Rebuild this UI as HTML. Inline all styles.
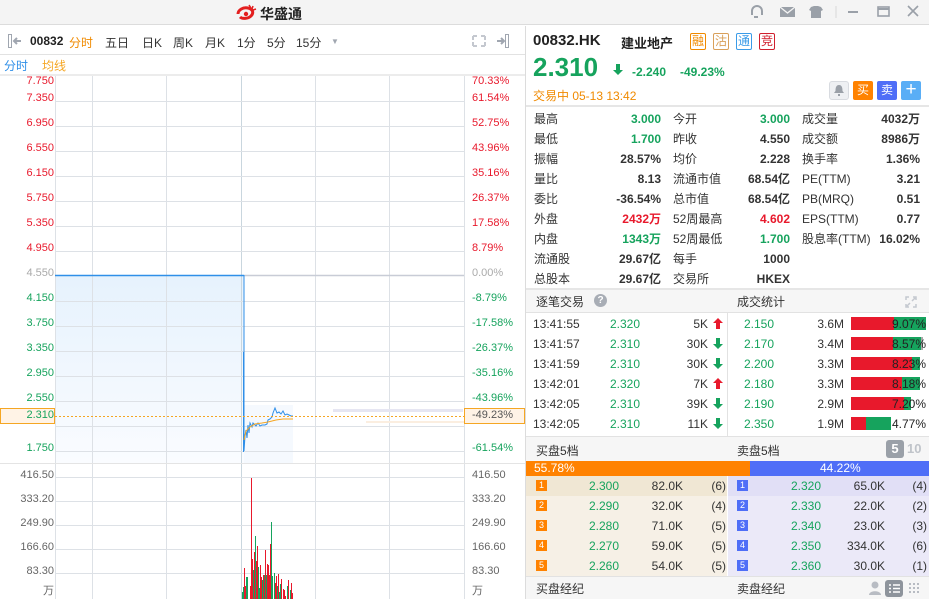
<!DOCTYPE html>
<html><head><meta charset="utf-8"><style>
*{margin:0;padding:0;box-sizing:border-box}
body{width:929px;height:599px;overflow:hidden;background:#fff;font-family:"Liberation Sans","Noto Sans CJK SC",sans-serif;font-size:12px;color:#333;position:relative}
.a{position:absolute;white-space:nowrap}
.g{color:#16a35d}.r{color:#e8192c}.o{color:#f08a00}
.b{font-weight:bold}
.rt{text-align:right}
.tag{position:absolute;top:33px;width:16px;height:17px;border:1px solid;border-radius:2px;font-size:12px;line-height:15px;text-align:center}
.bd{position:absolute;width:11px;height:11px;color:#fff;font-size:9px;line-height:11px;text-align:center}
.tb{position:absolute;top:34px;font-size:12px;white-space:nowrap}
</style></head><body>
<div class="a" style="left:0;top:0;width:929px;height:25px;background:#f4f4f4;border-bottom:1px solid #dcdcdc"></div>
<svg class="a" style="left:235px;top:4px" width="24" height="17" viewBox="0 0 24 17"><path d="M3 10c0-4 5-7 10-6 5 1 6 5 3 8-3 3-9 3-11 1" fill="none" stroke="#e31f1f" stroke-width="3"/><circle cx="11" cy="10" r="2.2" fill="#e31f1f"/><path d="M14 1l2 3M18 2l-1 3M21 5l-3 1" stroke="#e31f1f" stroke-width="1.5"/></svg>
<div class="a b" style="left:260px;top:4px;font-size:14px;color:#222">华盛通</div>
<svg class="a" style="left:748px;top:4px" width="180" height="16" viewBox="0 0 180 16"><g fill="none" stroke="#9aa0a8" stroke-width="2"><path d="M4 11V7a5 5 0 0 1 10 0v4"/><path d="M6 13h4"/></g><rect x="32" y="3" width="15" height="10" fill="#9aa0a8"/><path d="M32 3l7.5 6 7.5-6" stroke="#f4f4f4" stroke-width="1.3" fill="none"/><path d="M63 3l3-1h4l3 1 2 3-2 1v7h-10V7l-2-1z" fill="#9aa0a8"/><path d="M88 2v12" stroke="#d8d8d8"/><path d="M100 8h10" stroke="#9aa0a8" stroke-width="2"/><rect x="130" y="3" width="11" height="9" fill="none" stroke="#9aa0a8" stroke-width="1.6"/><path d="M130 5h11" stroke="#9aa0a8" stroke-width="2"/><path d="M160 2l10 10M170 2l-10 10" stroke="#9aa0a8" stroke-width="1.6"/></svg>

<div class="a" style="left:0;top:26px;width:525px;height:29px;border-bottom:1px solid #e2e2e2"></div>
<svg class="a" style="left:8px;top:34px" width="14" height="14"><rect x="0.5" y="0.5" width="3" height="13" fill="none" stroke="#a0a6b0"/><path d="M13 7H7M9 4L6 7l3 3" stroke="#a0a6b0" stroke-width="2" fill="none"/></svg>
<div class="tb b" style="left:30px;color:#222">00832</div>
<div class="tb" style="left:69px;color:#f08a00">分时</div>
<div class="tb" style="left:105px">五日</div>
<div class="tb" style="left:142px">日K</div>
<div class="tb" style="left:173px">周K</div>
<div class="tb" style="left:205px">月K</div>
<div class="tb" style="left:237px">1分</div>
<div class="tb" style="left:267px">5分</div>
<div class="tb" style="left:296px">15分</div>
<div class="a" style="left:331px;top:37px;font-size:8px;color:#a0a6b0">▼</div>
<svg class="a" style="left:472px;top:35px" width="14" height="12"><path d="M1 1h4M1 1v4M13 1h-4M13 1v4M1 11h4M1 11v-4M13 11h-4M13 11v-4" stroke="#c4c8cf" stroke-width="2"/></svg>
<svg class="a" style="left:496px;top:34px" width="14" height="14"><rect x="9.5" y="0.5" width="3" height="13" fill="none" stroke="#a0a6b0"/><path d="M1 7h6M5 4l3 3-3 3" stroke="#a0a6b0" stroke-width="2" fill="none"/></svg>
<div class="a" style="left:4px;top:57px;font-size:12px;color:#2f8fe8">分时</div>
<div class="a" style="left:42px;top:57px;font-size:12px;color:#f5a623">均线</div>
<div class="a" style="left:0;top:74px;width:525px;height:2px;background:#ececec"></div>
<div class="a" style="left:525px;top:26px;width:1px;height:573px;background:#dcdcdc"></div>

<svg class="a" style="left:0;top:0" width="525" height="599">
<defs><linearGradient id="fg" x1="0" y1="0" x2="0" y2="1"><stop offset="0" stop-color="#e6f2fd"/><stop offset="1" stop-color="#fafcff"/></linearGradient></defs>
<rect x="55" y="275" width="189" height="188" fill="url(#fg)"/>
<rect x="244" y="405" width="49" height="58" fill="#f5f9fe"/>
<g stroke="#dde1e6" stroke-width="1">
<path d="M55.5 76V599M92.5 76V599M166.5 76V599M315.5 76V599M389.5 76V599M464.5 76V599"/>
<path d="M241.5 76V599" stroke="#c9d6de"/>
<path d="M55 101.5H464M55 126.5H464M55 151.5H464M55 176.5H464M55 201.5H464M55 226.5H464M55 251.5H464M55 301.5H464M55 326.5H464M55 351.5H464M55 376.5H464M55 401.5H464M55 426.5H464M55 451.5H464"/>
<path d="M55 477.5H464M55 501.5H464M55 525.5H464M55 549.5H464M55 573.5H464"/>
<path d="M0 463.5H525" stroke="#e4e4e4"/>
</g>
<path d="M55 275.5H244" stroke="#2f8fe8" stroke-width="1.5"/>
<path d="M244 275.5H464" stroke="#c8ccd6" stroke-width="1.5"/>
<path d="M244 275V451" stroke="#2f8fe8" stroke-width="1"/>
<path d="M243.5 352V452" stroke="#2f8fe8" stroke-width="1"/>
<rect x="333" y="409" width="130" height="3" fill="#e6e6f2"/>
<rect x="366" y="421" width="98" height="2" fill="#fbeee0"/>
<polyline fill="none" stroke="#2f8fe8" stroke-width="1" points="244,451 245,436 246,430 247,438 248,425 249,433 250,423 252,427 253,423 255,425 256,426 258,423 260,426 262,425 265,425 267,424 268,420 270,419 272,417 273,413 275,408 277,413 279,412 281,414 283,411 285,415 287,414 289,415 291,416 293,416"/>
<polyline fill="none" stroke="#f5a623" stroke-width="1" points="244,440 246,431 250,427 255,424 262,423 268,422 272,421 276,420 283,419 293,419"/>
<path d="M55 416.5H464" stroke="#f5a623" stroke-dasharray="2,2"/>
<rect x="0.5" y="408.5" width="54" height="15" fill="#fff3e6" stroke="#f5a623"/>
<rect x="464.5" y="408.5" width="60" height="15" fill="#fff3e6" stroke="#f5a623"/>
<g stroke-width="1">
<path stroke="#16a35d" d="M242.5 599V592M243.5 599V587M246.5 599V577M247.5 599V577M253.5 599V570M255.5 599V536M258.5 599V567M259.5 599V588M262.5 599V580M264.5 599V575M266.5 599V575M271.5 599V522M272.5 599V576M274.5 599V573M277.5 599V586M279.5 599V592M280.5 599V584M287.5 599V586M290.5 599V590"/>
<path stroke="#e8192c" d="M244.5 599V568M245.5 599V586M250.5 599V586M251.5 599V478M252.5 599V559M254.5 599V552M256.5 599V561M257.5 599V546M260.5 599V565M261.5 599V577M263.5 599V575M265.5 599V550M267.5 599V564M268.5 599V565M269.5 599V575M270.5 599V544M275.5 599V583M276.5 599V576M278.5 599V574M281.5 599V579M283.5 599V589M284.5 599V590M285.5 599V596M288.5 599V580M291.5 599V583M292.5 599V593"/>
</g>
</svg>
<div style="font-size:11px">
<div class="a r rt" style="left:0;width:54px;top:75px">7.750</div>
<div class="a r rt" style="left:0;width:54px;top:92px">7.350</div>
<div class="a r rt" style="left:0;width:54px;top:117px">6.950</div>
<div class="a r rt" style="left:0;width:54px;top:142px">6.550</div>
<div class="a r rt" style="left:0;width:54px;top:167px">6.150</div>
<div class="a r rt" style="left:0;width:54px;top:192px">5.750</div>
<div class="a r rt" style="left:0;width:54px;top:217px">5.350</div>
<div class="a r rt" style="left:0;width:54px;top:242px">4.950</div>
<div class="a rt" style="left:0;width:54px;top:267px;color:#aaa">4.550</div>
<div class="a g rt" style="left:0;width:54px;top:292px">4.150</div>
<div class="a g rt" style="left:0;width:54px;top:317px">3.750</div>
<div class="a g rt" style="left:0;width:54px;top:342px">3.350</div>
<div class="a g rt" style="left:0;width:54px;top:367px">2.950</div>
<div class="a g rt" style="left:0;width:54px;top:392px">2.550</div>
<div class="a g rt" style="left:0;width:54px;top:409px">2.310</div>
<div class="a g rt" style="left:0;width:54px;top:442px">1.750</div>
<div class="a r" style="left:472px;top:75px">70.33%</div>
<div class="a r" style="left:472px;top:92px">61.54%</div>
<div class="a r" style="left:472px;top:117px">52.75%</div>
<div class="a r" style="left:472px;top:142px">43.96%</div>
<div class="a r" style="left:472px;top:167px">35.16%</div>
<div class="a r" style="left:472px;top:192px">26.37%</div>
<div class="a r" style="left:472px;top:217px">17.58%</div>
<div class="a r" style="left:472px;top:242px">8.79%</div>
<div class="a" style="left:472px;top:267px;color:#aaa">0.00%</div>
<div class="a g" style="left:472px;top:292px">-8.79%</div>
<div class="a g" style="left:472px;top:317px">-17.58%</div>
<div class="a g" style="left:472px;top:342px">-26.37%</div>
<div class="a g" style="left:472px;top:367px">-35.16%</div>
<div class="a g" style="left:472px;top:392px">-43.96%</div>
<div class="a" style="left:472px;top:409px;color:#555">-49.23%</div>
<div class="a g" style="left:472px;top:442px">-61.54%</div>
<div class="a rt" style="left:0;width:54px;top:469px;color:#666">416.50</div>
<div class="a rt" style="left:0;width:54px;top:493px;color:#666">333.20</div>
<div class="a rt" style="left:0;width:54px;top:517px;color:#666">249.90</div>
<div class="a rt" style="left:0;width:54px;top:541px;color:#666">166.60</div>
<div class="a rt" style="left:0;width:54px;top:565px;color:#666">83.30</div>
<div class="a rt" style="left:0;width:54px;top:582px;color:#666">万</div>
<div class="a" style="left:472px;top:469px;color:#666">416.50</div>
<div class="a" style="left:472px;top:493px;color:#666">333.20</div>
<div class="a" style="left:472px;top:517px;color:#666">249.90</div>
<div class="a" style="left:472px;top:541px;color:#666">166.60</div>
<div class="a" style="left:472px;top:565px;color:#666">83.30</div>
<div class="a" style="left:472px;top:582px;color:#666">万</div>
</div>

<div class="a b" style="left:533px;top:32px;font-size:15px;color:#222">00832.HK</div>
<div class="a b" style="left:621px;top:33px;font-size:13px;color:#222">建业地产</div>
<div class="tag" style="left:690px;color:#f08a00;border-color:#f08a00">融</div>
<div class="tag" style="left:713px;color:#d9a05a;border-color:#d9a05a">沽</div>
<div class="tag" style="left:736px;color:#3a9be8;border-color:#3a9be8">通</div>
<div class="tag" style="left:759px;color:#d0202e;border-color:#d0202e">竞</div>
<div class="a b g" style="left:533px;top:52px;font-size:26px">2.310</div>
<svg class="a" style="left:613px;top:64px" width="10" height="12"><path d="M3 0h4v6h3L5 11 0 6h3z" fill="#16a35d"/></svg>
<div class="a g b" style="left:632px;top:65px;font-size:12px">-2.240</div>
<div class="a g b" style="left:680px;top:65px;font-size:12px">-49.23%</div>
<div class="a o" style="left:533px;top:87px;font-size:12px">交易中 05-13 13:42</div>
<div class="a" style="left:829px;top:81px;width:20px;height:19px;background:#eef0f3;border:1px solid #d8dbe0;border-radius:3px"></div>
<svg class="a" style="left:834px;top:85px" width="10" height="11"><path d="M5 0C2 0 1.5 3 1.5 6L0 8h10L8.5 6C8.5 3 8 0 5 0zM4 9h2v2H4z" fill="#9aa0a8"/></svg>
<div class="a" style="left:853px;top:81px;width:20px;height:19px;background:#ff8200;color:#fff;text-align:center;line-height:19px;font-size:12px;border-radius:2px">买</div>
<div class="a" style="left:877px;top:81px;width:20px;height:19px;background:#4f6ef7;color:#fff;text-align:center;line-height:19px;font-size:12px;border-radius:2px">卖</div>
<div class="a" style="left:901px;top:81px;width:20px;height:19px;background:#5aaef6;color:#fff;text-align:center;line-height:18px;font-size:19px;border-radius:2px">+</div>
<div class="a" style="left:526px;top:105px;width:403px;height:2px;background:#e6e6e6"></div>

<div style="font-size:12px">
<div class="a" style="left:534px;top:109px;line-height:20px">最高<br>最低<br>振幅<br>量比<br>委比<br>外盘<br>内盘<br>流通股<br>总股本</div>
<div class="a b rt" style="left:600px;width:61px;top:109px;line-height:20px"><span class="g">3.000</span><br><span class="g">1.700</span><br>28.57%<br>8.13<br>-36.54%<br><span class="r">2432万</span><br><span class="g">1343万</span><br>29.67亿<br>29.67亿</div>
<div class="a" style="left:673px;top:109px;line-height:20px">今开<br>昨收<br>均价<br>流通市值<br>总市值<br>52周最高<br>52周最低<br>每手<br>交易所</div>
<div class="a b rt" style="left:720px;width:70px;top:109px;line-height:20px"><span class="g">3.000</span><br>4.550<br>2.228<br>68.54亿<br>68.54亿<br><span class="r">4.602</span><br><span class="g">1.700</span><br>1000<br>HKEX</div>
<div class="a" style="left:802px;top:109px;line-height:20px">成交量<br>成交额<br>换手率<br>PE(TTM)<br>PB(MRQ)<br>EPS(TTM)<br>股息率(TTM)</div>
<div class="a b rt" style="left:860px;width:60px;top:109px;line-height:20px">4032万<br>8986万<br>1.36%<br>3.21<br>0.51<br>0.77<br>16.02%</div>
</div>
<div class="a" style="left:526px;top:288px;width:403px;height:2px;background:#e6e6e6"></div>

<div class="a" style="left:526px;top:290px;width:403px;height:23px;background:#f6f6f6;border-bottom:1px solid #e2e2e2"></div>
<div class="a" style="left:536px;top:293px;font-size:12px">逐笔交易</div>
<div class="a" style="left:594px;top:294px;width:13px;height:13px;border-radius:50%;background:#a8adb5;color:#fff;font-size:10px;text-align:center;line-height:13px;font-weight:bold">?</div>
<div class="a" style="left:737px;top:293px;font-size:12px">成交统计</div>
<svg class="a" style="left:905px;top:296px" width="12" height="12"><path d="M1 4V1h3M11 4V1H8M1 8v3h3M11 8v3H8M2 10l3-3M10 2L7 5" stroke="#c4c8cf" stroke-width="1.5" fill="none"/></svg>
<div class="a" style="left:727px;top:313px;width:1px;height:124px;background:#e2e2e2"></div>
<div style="font-size:12px">
<div class="a" style="left:533px;top:314px;line-height:20px">13:41:55<br>13:41:57<br>13:41:59<br>13:42:01<br>13:42:05<br>13:42:05</div>
<div class="a g" style="left:610px;top:314px;line-height:20px">2.320<br>2.310<br>2.310<br>2.320<br>2.310<br>2.310</div>
<div class="a rt" style="left:660px;width:48px;top:314px;line-height:20px">5K<br>30K<br>30K<br>7K<br>39K<br>11K</div>
<svg class="a" style="left:713px;top:318px" width="10" height="112"><path d="M5 0l5 5H7v6H3V5H0z" fill="#e8192c"/><path d="M3 20h4v6h3l-5 5-5-5h3z" fill="#16a35d"/><path d="M3 40h4v6h3l-5 5-5-5h3z" fill="#16a35d"/><path d="M5 60l5 5H7v6H3v-6H0z" fill="#e8192c"/><path d="M3 80h4v6h3l-5 5-5-5h3z" fill="#16a35d"/><path d="M3 100h4v6h3l-5 5-5-5h3z" fill="#16a35d"/></svg>
<div class="a g" style="left:744px;top:314px;line-height:20px">2.150<br>2.170<br>2.200<br>2.180<br>2.190<br>2.350</div>
<div class="a rt" style="left:790px;width:54px;top:314px;line-height:20px">3.6M<br>3.4M<br>3.3M<br>3.3M<br>2.9M<br>1.9M</div>
</div>
<svg class="a" style="left:851px;top:317px" width="78" height="116">
<rect x="0" y="0" width="43" height="13" fill="#e8192c"/><rect x="43" y="0" width="32" height="13" fill="#16a35d"/>
<rect x="0" y="20" width="42" height="13" fill="#e8192c"/><rect x="42" y="20" width="28" height="13" fill="#16a35d"/><rect x="70" y="20" width="2" height="13" fill="#aaa"/>
<rect x="0" y="40" width="61" height="13" fill="#e8192c"/><rect x="61" y="40" width="8" height="13" fill="#16a35d"/>
<rect x="0" y="60" width="51" height="13" fill="#e8192c"/><rect x="51" y="60" width="18" height="13" fill="#16a35d"/>
<rect x="0" y="80" width="53" height="13" fill="#e8192c"/><rect x="53" y="80" width="7" height="13" fill="#16a35d"/>
<rect x="0" y="100" width="15" height="13" fill="#e8192c"/><rect x="15" y="100" width="25" height="13" fill="#16a35d"/>
</svg>
<div class="a rt" style="left:860px;width:66px;top:314px;line-height:20px;font-size:12px;color:#222">9.07%<br>8.57%<br>8.23%<br>8.18%<br>7.20%<br>4.77%</div>

<div class="a" style="left:526px;top:436px;width:403px;height:25px;background:#f6f6f6;border-top:1px solid #e2e2e2"></div>
<div class="a" style="left:536px;top:442px;font-size:12px">买盘5档</div>
<div class="a" style="left:737px;top:442px;font-size:12px">卖盘5档</div>
<div class="a b" style="left:886px;top:440px;width:18px;height:18px;background:#9aa0a8;color:#fff;border-radius:3px;text-align:center;line-height:18px;font-size:13px">5</div>
<div class="a b" style="left:907px;top:441px;font-size:13px;color:#c0c4ca">10</div>
<div class="a" style="left:526px;top:461px;width:224px;height:15px;background:#ff8200;color:#fff;font-size:12px;line-height:15px;padding-left:8px">55.78%</div>
<div class="a" style="left:750px;top:461px;width:179px;height:15px;background:#4f6ef7;color:#fff;font-size:12px;line-height:15px;padding-left:70px">44.22%</div>
<div class="a" style="left:526px;top:476px;width:201px;height:20px;background:#f0e7d4"></div>
<div class="a" style="left:526px;top:496px;width:201px;height:80px;background:#f6f0e6"></div>
<div class="a" style="left:728px;top:476px;width:201px;height:20px;background:#e1dff6"></div>
<div class="a" style="left:728px;top:496px;width:201px;height:80px;background:#ebe9f8"></div>
<div class="bd" style="left:536px;top:480px;background:#ff8200">1</div>
<div class="bd" style="left:536px;top:500px;background:#ff8200">2</div>
<div class="bd" style="left:536px;top:520px;background:#ff8200">3</div>
<div class="bd" style="left:536px;top:540px;background:#ff8200">4</div>
<div class="bd" style="left:536px;top:560px;background:#ff8200">5</div>
<div class="bd" style="left:737px;top:480px;background:#4f6ef7">1</div>
<div class="bd" style="left:737px;top:500px;background:#4f6ef7">2</div>
<div class="bd" style="left:737px;top:520px;background:#4f6ef7">3</div>
<div class="bd" style="left:737px;top:540px;background:#4f6ef7">4</div>
<div class="bd" style="left:737px;top:560px;background:#4f6ef7">5</div>
<div style="font-size:12px">
<div class="a g" style="left:589px;top:476px;line-height:20px">2.300<br>2.290<br>2.280<br>2.270<br>2.260</div>
<div class="a rt" style="left:640px;width:43px;top:476px;line-height:20px">82.0K<br>32.0K<br>71.0K<br>59.0K<br>54.0K</div>
<div class="a rt" style="left:700px;width:26px;top:476px;line-height:20px">(6)<br>(4)<br>(5)<br>(5)<br>(5)</div>
<div class="a g" style="left:791px;top:476px;line-height:20px">2.320<br>2.330<br>2.340<br>2.350<br>2.360</div>
<div class="a rt" style="left:840px;width:45px;top:476px;line-height:20px">65.0K<br>22.0K<br>23.0K<br>334.0K<br>30.0K</div>
<div class="a rt" style="left:900px;width:27px;top:476px;line-height:20px">(4)<br>(2)<br>(3)<br>(6)<br>(1)</div>
</div>
<div class="a" style="left:526px;top:576px;width:403px;height:23px;background:#f6f6f6;border-top:1px solid #e2e2e2"></div>
<div class="a" style="left:536px;top:580px;font-size:12px">买盘经纪</div>
<div class="a" style="left:737px;top:580px;font-size:12px">卖盘经纪</div>
<svg class="a" style="left:868px;top:580px" width="60" height="17"><circle cx="7" cy="5" r="3.5" fill="#b8bcc3"/><path d="M1 15c0-5 12-5 12 0z" fill="#b8bcc3"/><rect x="17" y="0" width="18" height="17" rx="3" fill="#8e949c"/><path d="M21 5h2M25 5h7M21 8.5h2M25 8.5h7M21 12h2M25 12h7" stroke="#fff" stroke-width="1.6"/><g fill="#b8bcc3"><rect x="41" y="3" width="2" height="2"/><rect x="45" y="3" width="2" height="2"/><rect x="49" y="3" width="2" height="2"/><rect x="41" y="7" width="2" height="2"/><rect x="45" y="7" width="2" height="2"/><rect x="49" y="7" width="2" height="2"/><rect x="41" y="11" width="2" height="2"/><rect x="45" y="11" width="2" height="2"/><rect x="49" y="11" width="2" height="2"/></g></svg>
</body></html>
